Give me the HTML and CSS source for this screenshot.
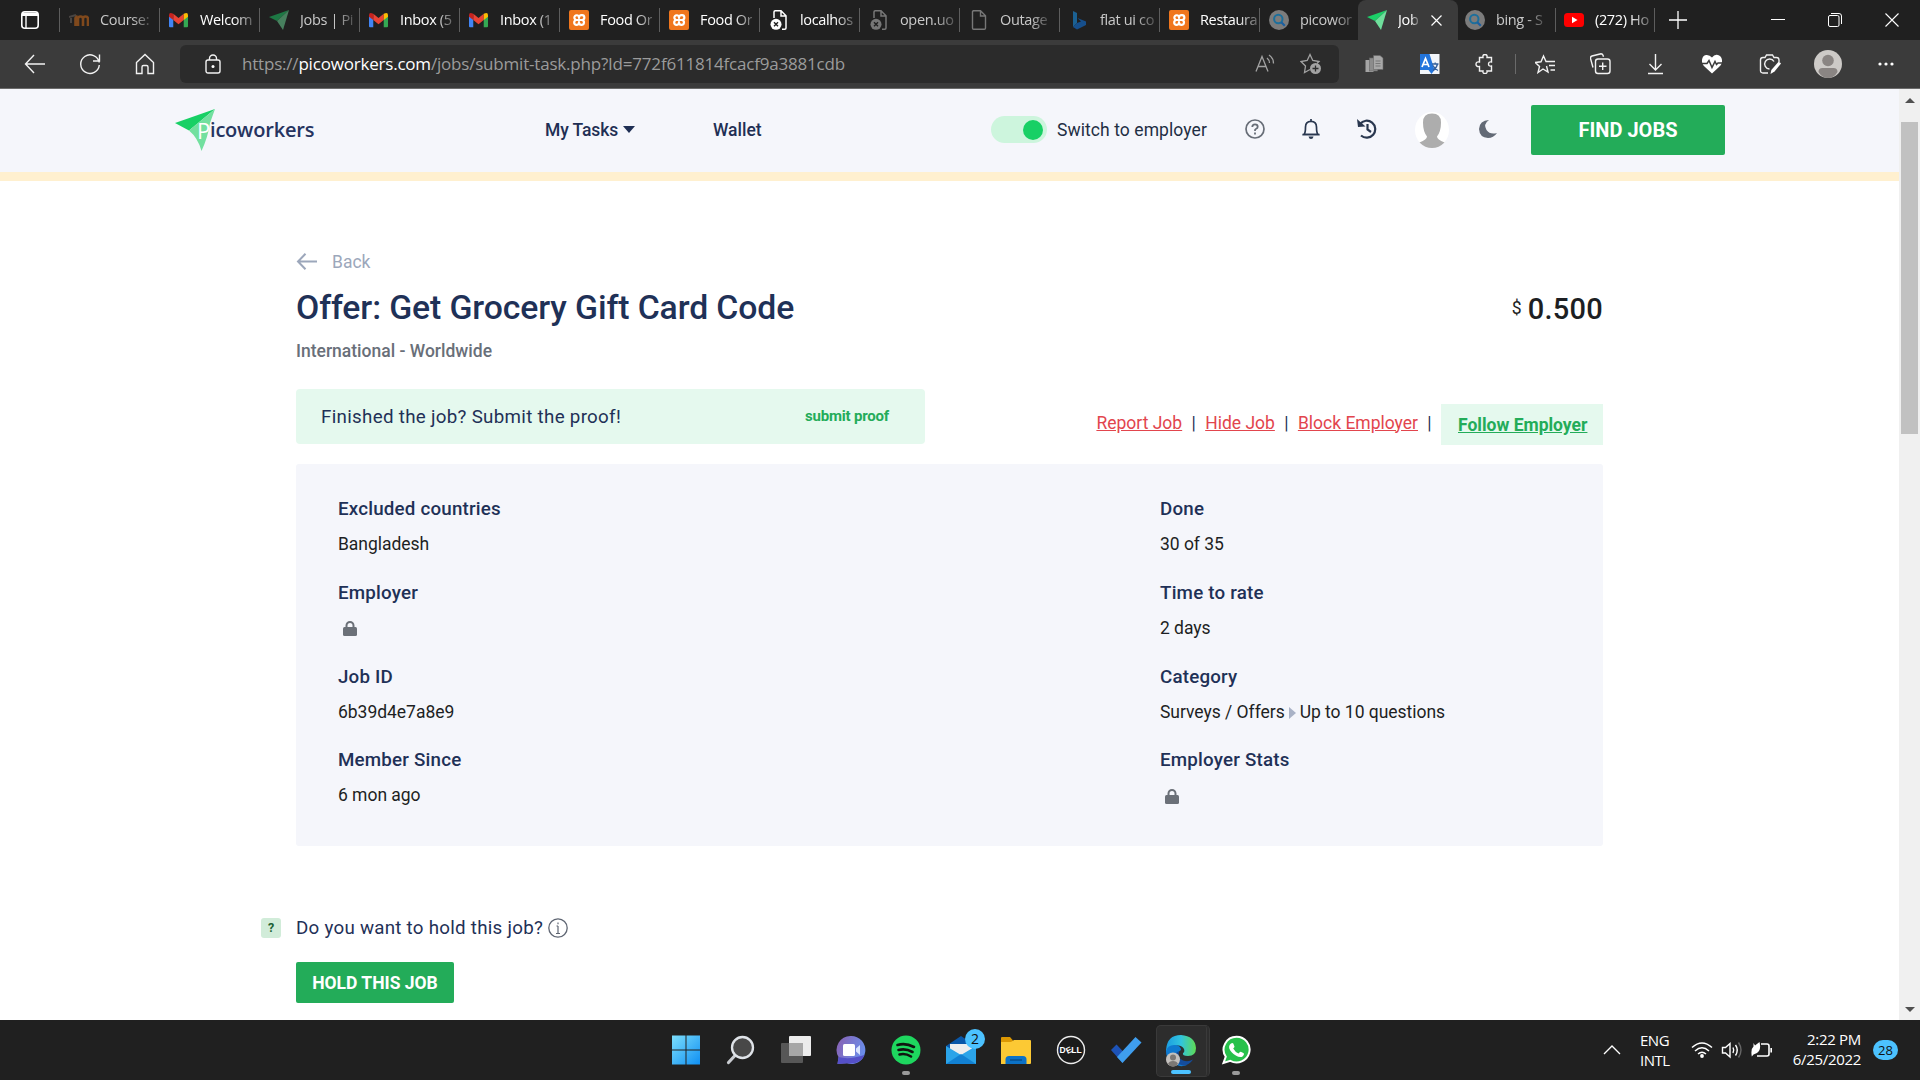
FILE: index.html
```html
<!DOCTYPE html>
<html lang="en">
<head>
<meta charset="utf-8">
<title>Job - Picoworkers</title>
<link rel="stylesheet" href="styles.css">
</head>
<body>
<svg class="defs" width="0" height="0">
  <defs>
    <symbol id="gmail" viewBox="0 0 20 16"><path fill="#4285f4" d="M0 3v11.500Q0 15.500 1 15.500H4.500V6z"/><path fill="#34a853" d="M15.500 6v9.500H19q1 0 1-1V3z"/><path fill="#ea4335" d="M4.500 1.500V8L10 12.500 15.500 8V1.500L10 6z"/><path fill="#c5221f" d="M0 3v1.500L4.500 8V1.500Q0-1 0 3z"/><path fill="#fbbc04" d="M20 3v1.500L15.500 8V1.500Q20-1 20 3z"/></symbol>
    <symbol id="xampp" viewBox="0 0 20 20"><rect width="20" height="20" rx="2" fill="#f0761d"/><path d="M9.800 10H7.200A2.400 2.400 0 1 1 9.900 6.600Q10 8 10 8 10 5 12.800 5.100A2.400 2.400 0 0 1 13 10 2.500 2.500 0 1 1 10.100 13.200Q10 12 10 12 10 15 7.200 14.900A2.500 2.500 0 0 1 7.200 10H13" fill="none" stroke="#fff" stroke-width="2.200" stroke-linejoin="round"/></symbol>
    <symbol id="plane" viewBox="0 0 20 20"><path fill="#1bd068" d="M0 7 20 0 8 11z"/><path fill="#6fdf9c" d="M20 0 8 11 14 20z"/></symbol>
    <symbol id="page" viewBox="0 0 20 20"><path d="M4 .8h7.500l5 5V18q0 1.200-1.200 1.200H4.700Q3.500 19.200 3.500 18V2Q3.500.8 4.700.8M11.500.8V6h5" fill="none" stroke="currentColor" stroke-width="1.400"/></symbol>
    <symbol id="pagex" viewBox="0 0 20 20"><path d="M5 8V2Q5 .8 6.200.8H12l5 5V18q0 1.200-1.200 1.200H13M12 .8V6h5" fill="none" stroke="currentColor" stroke-width="1.500"/><circle cx="7" cy="14.300" r="5.500" fill="currentColor"/><path d="M5 12.300l4 4m0-4l-4 4" stroke="#202020" stroke-width="1.400"/></symbol>
    <symbol id="bsearch" viewBox="0 0 20 20"><circle cx="10" cy="10" r="10" fill="#7c7c7c"/><circle cx="9.300" cy="9" r="4.200" fill="none" stroke="#1c6f9c" stroke-width="2"/><path d="M12.300 12.300l3.500 3.500" stroke="#1c5fa0" stroke-width="2.200"/></symbol>
    <symbol id="lock" viewBox="0 0 14 15"><path d="M1.500 6h11q1.500 0 1.500 1.500V13.500Q14 15 12.500 15h-11Q0 15 0 13.500v-6Q0 6 1.500 6z" fill="#6b7078"/><path d="M3.500 7V4.500a3.500 3.500 0 0 1 7 0V7" fill="none" stroke="#6b7078" stroke-width="2"/></symbol>
  </defs>
</svg>

<div class="tabbar">
  <div class="tab-actions"><svg width="18" height="18" viewBox="0 0 18 18"><rect x=".8" y=".8" width="16.400" height="16.400" rx="3" fill="none" stroke="#fff" stroke-width="1.600"/><path d="M1 1.500h16v3.500H1z" fill="#fff"/><path d="M5 4v13" stroke="#fff" stroke-width="1.400"/></svg></div>
  <div class="tab dim"><svg class="fav" viewBox="0 0 20 20"><path d="M6.500 16V8.500q0-2 2-2.300M9 16V9a2.500 2.500 0 0 1 5 0v7M14 9a2.500 2.500 0 0 1 5 0v7" fill="none" stroke="#80491c" stroke-width="2.600"/><path d="M0 7l7-2M2 8v5" stroke="#494543" stroke-width="2"/></svg><span class="label">Course:</span></div>
  <div class="tab"><svg class="fav gm"><use href="#gmail"/></svg><span class="label">Welcom</span></div>
  <div class="tab dim"><svg class="fav faded"><use href="#plane"/></svg><span class="label">Jobs | Pi</span></div>
  <div class="tab"><svg class="fav gm"><use href="#gmail"/></svg><span class="label">Inbox (5</span></div>
  <div class="tab"><svg class="fav gm"><use href="#gmail"/></svg><span class="label">Inbox (1</span></div>
  <div class="tab"><svg class="fav"><use href="#xampp"/></svg><span class="label">Food Or</span></div>
  <div class="tab"><svg class="fav"><use href="#xampp"/></svg><span class="label">Food Or</span></div>
  <div class="tab"><svg class="fav"><use href="#pagex"/></svg><span class="label">localhos</span></div>
  <div class="tab dim"><svg class="fav grey"><use href="#pagex"/></svg><span class="label">open.uo</span></div>
  <div class="tab dim"><svg class="fav grey"><use href="#page"/></svg><span class="label">Outage</span></div>
  <div class="tab dim"><svg class="fav" viewBox="0 0 20 20"><path fill="#1b6193" d="M4 1l4 2v10l-4 4z"/><path fill="#164f8c" d="M4 17l4-4 4-1.500L8.500 8 17 11.500V15l-9 4.500z"/></svg><span class="label">flat ui co</span></div>
  <div class="tab"><svg class="fav"><use href="#xampp"/></svg><span class="label">Restaura</span></div>
  <div class="tab dim nosep before-active"><svg class="fav"><use href="#bsearch"/></svg><span class="label">picowor</span></div>
  <div class="tab active"><svg class="fav"><use href="#plane"/></svg><span class="label">Job</span><svg class="tab-x" width="11" height="11" viewBox="0 0 11 11"><path d="M.5.500l10 10m0-10l-10 10" stroke="#fff" stroke-width="1.200"/></svg></div>
  <div class="tab dim short"><svg class="fav"><use href="#bsearch"/></svg><span class="label">bing - S</span></div>
  <div class="tab last"><svg class="fav" viewBox="0 0 20 20"><rect y="3" width="20" height="14" rx="3.500" fill="#f00"/><path d="M8 6.800v6.400l5.500-3.200z" fill="#fff"/></svg><span class="label">(272) Ho</span></div>
  <svg class="plus" width="18" height="18" viewBox="0 0 18 18"><path d="M9 0v18M0 9h18" stroke="#fff" stroke-width="1.300"/></svg>
  <div class="window-controls">
    <svg width="14" height="14" viewBox="0 0 14 14"><path d="M0 6.500h14" stroke="#fff"/></svg>
    <svg width="14" height="14" viewBox="0 0 14 14"><rect x=".5" y="2.500" width="10.500" height="11" rx="1.500" fill="none" stroke="#fff"/><path d="M3 .5h8q2.500 0 2.500 2.500v8" fill="none" stroke="#fff"/></svg>
    <svg width="14" height="14" viewBox="0 0 14 14"><path d="M.5.500l13 13m0-13l-13 13" stroke="#fff" stroke-width="1.100"/></svg>
  </div>
</div>

<div class="toolbar">
  <div class="navbtns">
    <svg width="22" height="20" viewBox="0 0 22 20"><path d="M21 10H1.500M10 1L1.500 10l8.500 9" class="ln"/></svg>
    <svg width="22" height="22" viewBox="0 0 22 22"><path d="M20.200 9.500A9.300 9.300 0 1 0 20.300 12M20.500 1.500V8H14" class="ln"/></svg>
    <svg width="22" height="22" viewBox="0 0 22 22"><path d="M2.500 9.500L11 1.500l8.500 8V20.500H14V14q0-1.500-1.500-1.500h-3Q8 12.500 8 14v6.500H2.500z" class="ln"/></svg>
  </div>
  <div class="address">
    <svg width="16" height="20" viewBox="0 0 16 20"><rect x="1" y="6" width="14" height="13" rx="2" class="ln"/><path d="M4.500 6V4.500a3.500 3.500 0 0 1 7 0V6" class="ln"/><circle cx="8" cy="12.500" r="1.500" fill="#fff"/></svg>
    <span class="url">https://<b>picoworkers.com</b>/jobs/submit-task.php?Id=772f611814fcacf9a3881cdb</span>
    <svg class="read" width="20" height="20" viewBox="0 0 20 20"><path d="M1 17.500L7 2.500l6 15M3 12.500h8M12 4q2.500 2 2.500 5M14 1q4.500 3 4.500 8.500" fill="none" stroke="#a2a2a2" stroke-width="1.300"/></svg>
    <svg width="22" height="22" viewBox="0 0 22 22"><path d="M10 16.500l-5.500 3 1-6.500L1 8.500l6.200-1L10 1.500l2.800 6 6.200 1-2 2" fill="none" stroke="#a2a2a2" stroke-width="1.300"/><circle cx="15.500" cy="15.500" r="5.500" fill="#a2a2a2"/><path d="M15.500 12.500v6m-3-3h6" stroke="#2b2b2b" stroke-width="1.300"/></svg>
  </div>
  <div class="extensions">
    <svg width="20" height="20" viewBox="0 0 20 20"><rect x="1" y="6" width="8" height="12" fill="#a5a5a5"/><rect x="5" y="4" width="8" height="13" fill="#8c8c8c" stroke="#666" stroke-width=".6"/><path d="M9 1.500h6.500L18.500 4v11.500H9z" fill="#a8a8a8" stroke="#666" stroke-width=".6"/><path d="M11 7h5M11 9.500h5M11 12h5" stroke="#777"/></svg>
    <svg width="20" height="20" viewBox="0 0 20 20"><rect width="20" height="20" fill="#f3f6fa"/><path d="M0 0h10l5 16-3 4-3-4H0z" fill="#2375dc"/><path d="M2.500 13L6 4.500 9.500 13M3.800 10.500h4.500" fill="none" stroke="#fff" stroke-width="1.700"/><path d="M12.500 10H19M15.700 8.500V10M13.500 16.500q3.500-2 4.500-6.500M13.500 11.500q1.500 3.500 5 5" fill="none" stroke="#35609b" stroke-width="1.300"/></svg>
    <svg width="20" height="20" viewBox="0 0 20 20"><path d="M5 3.500h3.500q-.5-3 2-3t2 3H17v4.500q-3-.5-3 2t3 2V17h-4.500q.5 2.500-2 2.500t-2-2.500H5v-4.500q-3.500.5-3.500-2.300T5 8z" class="ln"/></svg>
    <i class="bar"></i>
    <svg width="22" height="20" viewBox="0 0 22 20"><path d="M12 12l1.500 6-5-3-5 3.500L5 12.500.8 8.500l5.700-.7L9 2l2.500 5.500h9M14.500 11.500h6M16 16h4.500" class="ln"/></svg>
    <svg width="22" height="22" viewBox="0 0 22 22"><rect x="6" y="6" width="14.500" height="14.500" rx="2.500" class="ln"/><path d="M13.200 9.500v7.500M9.500 13.200H17M3.500 14.500L1 5.500Q.8 3.500 2.500 3l9-2.200q1.500 0 2 1.500l.5 1.500" class="ln"/></svg>
    <svg width="18" height="22" viewBox="0 0 18 22"><path d="M9 1v15.500M3 11l6 6 6-6M1.500 20.500h15" class="ln"/></svg>
    <div class="wide">
      <svg width="22" height="20" viewBox="0 0 22 20"><path d="M11 3.500q-2.500-3-6-2.500T1 6q-.5 4 3 7l7 6.500 7-6.500q3.500-3 3-7t-4-5-6 2.500z" fill="#fff"/><path d="M0 9.500h6l2-3 3 7 3-6 1.500 3L17 9h5" fill="none" stroke="#3b3b3b" stroke-width="1.500"/></svg>
      <svg width="22" height="22" viewBox="0 0 22 22"><path d="M9 20H4q-2.500 0-2.500-2.500V7Q1.500 4.500 4 4.500h2L7.500 2h6L15 4.500h2.500Q20 4.500 20 7v2M15 8.500a5 5 0 1 0-4.500 7.500" class="ln"/><path d="M11.500 21l.8-4 7-8q1.500-.5 2.700 1.500l-6.500 8z" fill="#fff"/></svg>
      <svg width="28" height="28" viewBox="0 0 28 28"><circle cx="14" cy="14" r="14" fill="#cdcac7"/><circle cx="14" cy="10.500" r="5.800" fill="#8a8583"/><path d="M4.500 22q0-4 4-4h11q4 0 4 4-3.500 6-9.500 6t-9.500-6z" fill="#8a8583"/></svg>
      <svg width="18" height="6" viewBox="0 0 18 6"><circle cx="3" cy="3" r="1.600" fill="#fff"/><circle cx="9" cy="3" r="1.600" fill="#fff"/><circle cx="15" cy="3" r="1.600" fill="#fff"/></svg>
    </div>
  </div>
</div>

<div class="viewport">
  <div class="page">
    <header class="site-header">
      <div class="logo"><svg width="41" height="42" viewBox="0 0 41 42"><path fill="#18d065" d="M0 14 40 0 14 21.500z"/><path fill="#72e09f" d="M40 0 14 21.500Q23 29 26.500 42 33 28 35 14z"/></svg><span class="logo-p">P</span><span class="logo-text">icoworkers</span></div>
      <nav class="menu"><a class="tasks"><span>My Tasks</span><i class="caret"></i></a><a>Wallet</a></nav>
      <div class="tools">
        <span class="toggle"><i></i></span><span class="switch">Switch to employer</span>
        <svg class="help" width="20" height="20" viewBox="0 0 20 20"><circle cx="10" cy="10" r="9" fill="none" stroke="#676d77" stroke-width="1.700"/><path d="M7.300 8q0-2.700 2.700-2.700T12.700 7.700q0 1.300-1.500 2T10 11.500v.5M10 13.500v2" fill="none" stroke="#676d77" stroke-width="1.800"/></svg>
        <svg class="bell" width="18" height="20" viewBox="0 0 18 20"><path d="M9 0v2M2 15.500Q3.500 14 3.500 8 3.500 2.300 9 2.300T14.500 8q0 6 1.500 7.500z" fill="none" stroke="#29374f" stroke-width="1.700"/><path d="M.5 15.500h17" stroke="#29374f" stroke-width="1.600"/><path d="M6.500 17.500h5q-.5 2.500-2.500 2.500t-2.500-2.500z" fill="#29374f"/></svg>
        <svg class="hist" width="20" height="20" viewBox="0 0 20 20"><path d="M3 5A8.500 8.500 0 1 1 4 16.500M10.500 5v5.500l3.500 2.500" fill="none" stroke="#29374f" stroke-width="2.200"/><path d="M0 0l1 8 7.500-.5z" fill="#29374f"/></svg>
        <svg class="face" width="34" height="36" viewBox="0 0 34 36"><ellipse cx="17" cy="18" rx="17" ry="18" fill="#fff"/><path d="M17 1.500q9 0 9 9 0 9-4 14 0 3 7.500 6Q24 36 17 36T4.500 30.500Q12 27.500 12 24.500 8 19.500 8 10.500q0-9 9-9z" fill="#adadad"/></svg>
        <svg class="moon" width="18" height="18" viewBox="0 0 18 18"><path d="M10 0Q4 4 7.500 10q3.500 5 10.500 3-3.500 5-9 5-8.500-.5-9-9Q.5.500 10 0z" fill="#636a76"/></svg>
        <button class="find">FIND JOBS</button>
      </div>
    </header>
    <div class="strip"></div>
    <main>
      <div class="back"><svg width="21" height="17" viewBox="0 0 21 17"><path d="M21 8.500H2M9.500.800L2 8.500l7.500 7.700" fill="none" stroke="#9ca7bb" stroke-width="2"/></svg><span>Back</span></div>
      <div class="heading"><h1>Offer: Get Grocery Gift Card Code</h1><div class="price"><small>$</small><b>0.500</b></div></div>
      <div class="region">International - Worldwide</div>
      <div class="actions">
        <div class="proof"><span class="ask">Finished the job? Submit the proof!</span><span class="submit">submit proof</span></div>
        <div class="links"><a>Report Job</a><i>|</i><a>Hide Job</a><i>|</i><a>Block Employer</a><i>|</i><a class="follow">Follow Employer</a></div>
      </div>
      <section class="details">
        <dl>
          <dt>Excluded countries</dt><dd>Bangladesh</dd>
          <dt>Employer</dt><dd><svg class="lock"><use href="#lock"/></svg></dd>
          <dt>Job ID</dt><dd>6b39d4e7a8e9</dd>
          <dt>Member Since</dt><dd>6 mon ago</dd>
        </dl>
        <dl>
          <dt>Done</dt><dd>30 of 35</dd>
          <dt>Time to rate</dt><dd>2 days</dd>
          <dt>Category</dt><dd>Surveys / Offers<i class="arrow"></i>Up to 10 questions</dd>
          <dt>Employer Stats</dt><dd><svg class="lock"><use href="#lock"/></svg></dd>
        </dl>
      </section>
      <div class="hold">
        <span class="qmark">?</span><span class="question">Do you want to hold this job?</span>
        <svg width="20" height="20" viewBox="0 0 20 20"><circle cx="10" cy="10" r="9.200" fill="none" stroke="#5f6673" stroke-width="1.300"/><path d="M10 8v7.500M10 4.500v1.700M8.500 8H10M8 15.500h4" fill="none" stroke="#5f6673" stroke-width="1.200"/></svg>
      </div>
      <button class="hold-btn">HOLD THIS JOB</button>
    </main>
  </div>
  <div class="scrollbar"><i class="up"></i><div class="thumb"></div><i class="down"></i></div>
</div>

<footer class="taskbar">
  <div class="apps">
    <div><svg width="30" height="30" viewBox="0 0 30 30"><defs><linearGradient id="w" gradientUnits="userSpaceOnUse" x1="0" y1="0" x2="30" y2="30"><stop stop-color="#7fe0fb"/><stop offset="1" stop-color="#0c8df2"/></linearGradient></defs><path fill="url(#w)" d="M1 .5h13.500v14H1zM15.500.500H29v14H15.500zM1 15.500h13.500v14H1zM15.500 15.500H29v14H15.500z"/></svg></div>
    <div><svg width="30" height="30" viewBox="0 0 30 30"><path d="M9.500 20L2.500 27.500" stroke="#c9ccd1" stroke-width="3.200" stroke-linecap="round"/><circle cx="16.500" cy="12.500" r="10.500" fill="#484848" stroke="#dfe3e8" stroke-width="2.300"/></svg></div>
    <div><svg width="30" height="30" viewBox="0 0 30 30"><rect x="8" y="1" width="22" height="20" rx="1" fill="#ececec"/><rect x="0" y="8" width="22" height="20" rx="1" fill="#626262" fill-opacity=".85"/><path d="M8 8h14v13H8z" fill="#a7a7a7"/></svg></div>
    <div><svg width="30" height="30" viewBox="0 0 30 30"><defs><linearGradient id="c" x2="1" y2=".4"><stop stop-color="#8a5fb0"/><stop offset="1" stop-color="#6b8dea"/></linearGradient></defs><path d="M15 1a14 14 0 1 1-4 27.300L1.500 29l1-7A14 14 0 0 1 15 1z" fill="url(#c)"/><path d="M1.500 29l1-7q11 3 26-2-4 10-17.500 8.300z" fill="#5550c8"/><rect x="7" y="9" width="12" height="12" rx="1.500" fill="#fff"/><path d="M20 13.500l4-3.500v10l-4-3.500z" fill="#d9e4ff"/></svg></div>
    <div class="running"><svg width="30" height="30" viewBox="0 0 30 30"><circle cx="15" cy="15" r="14.500" fill="#1ed75f"/><path d="M6.500 10q8-2.500 16.500 2M7.500 15q7-2 14 2M8.500 19.500q6-1.500 11.500 2" fill="none" stroke="#101510" stroke-width="2.600" stroke-linecap="round"/></svg></div>
    <div class="mail"><svg width="30" height="30" viewBox="0 0 30 30"><path d="M0 11L15 1l15 10v4H0z" fill="#0a57a8"/><path d="M4 9h22v8l-11 6-11-6z" fill="#eee"/><path d="M0 11l15 9 15-9v18H0z" fill="#2ba4e9"/><path d="M0 29l15-10 15 10z" fill="#1281d3"/></svg><span class="badge">2</span></div>
    <div><svg width="30" height="30" viewBox="0 0 30 30"><path d="M0 3q0-1 1-1h8l3 3.500V9H0z" fill="#dc9803"/><path d="M0 7h10l3-2h16q1 0 1 1v22q0 1-1 1H0z" fill="#fcc934"/><path d="M4.500 29v-4.500Q4.500 21 8 21h14q3.500 0 3.500 3.500V29z" fill="#0c72c7"/><path d="M9 25h12" stroke="#064f8e" stroke-width="1.500"/></svg></div>
    <div class="dell"><svg width="30" height="30" viewBox="0 0 30 30"><circle cx="15" cy="15" r="13.500" fill="#1b1b1b" stroke="#ececec" stroke-width="1.400"/></svg><span class="dell-name">D<em>E</em>LL</span></div>
    <div><svg width="32" height="30" viewBox="0 0 32 30"><path d="M1 15l5.500-5.500 9 9.500-3 9z" fill="#1d53b8"/><path d="M12.500 28l-5.500-6L25.500 2l6 5.500z" fill="#3f9eee"/></svg></div>
    <div class="current"><svg width="34" height="34" viewBox="0 0 34 34"><defs><linearGradient id="e" x2="1"><stop stop-color="#1b9de2"/><stop offset=".5" stop-color="#31c4de"/><stop offset="1" stop-color="#5fdb52"/></linearGradient></defs><path d="M2 17Q3 2 17 2q14 1 15 13 0 8-8 8-6 0-5-3 2-1 1-4-2-4-7-3.500Q5 13 2 20z" fill="url(#e)"/><path d="M2 18q2-7 10-6 5 1 5 5-4 2-3 7 2 7 9 8-5 2-9 .5Q2 29 2 18z" fill="#0f79cf"/><path d="M15 18q-2 7 4 9.500 5 2 10-1-4 6-10 6-9-2-8.500-9 .5-4 4.500-5.500z" fill="#154d9d"/><circle cx="9" cy="26.500" r="7" fill="#c4c1be"/><circle cx="9" cy="24.500" r="3" fill="#7c7875"/><path d="M4 31q1-3 5-3t5 3q-2 2.500-5 2.500T4 31z" fill="#7c7875"/></svg></div>
    <div class="running"><svg width="30" height="30" viewBox="0 0 30 30"><path d="M15.500 1.800a13 12.800 0 1 1-6.200 24L2.500 28l2.300-6.300A13 12.800 0 0 1 15.500 1.800z" fill="#27c14b" stroke="#fff" stroke-width="2"/><path d="M10 8.500q1.500-1.200 2.300 0l1.200 3q0 1-1.300 2 2 3.500 5.300 5 1.500-2 2.300-1.800l3 1.500q.7 1.500-1 3-2.500 2-7-.7-5-3-6.500-7-.8-3 1.700-5z" fill="#fff"/></svg></div>
  </div>
  <div class="tray">
    <svg width="18" height="10" viewBox="0 0 18 10"><path d="M1 9l8-8 8 8" fill="none" stroke="#fff" stroke-width="1.300"/></svg>
    <div class="lang"><span>ENG</span><span>INTL</span></div>
    <div class="status">
      <svg width="22" height="18" viewBox="0 0 22 18"><path d="M1 6.500q10-9 20 0M4 10q7-6.500 14 0M7 13q4-3.500 8 0" fill="none" stroke="#fff" stroke-width="1.500"/><circle cx="11" cy="15" r="1.900" fill="#fff"/></svg>
      <svg width="22" height="18" viewBox="0 0 22 18"><path d="M1.500 6.500v5.500h3L9 16V2.500L4.500 6.500z" fill="none" stroke="#fff" stroke-width="1.400"/><path d="M12 6.500q1.500 2.500 0 5.500M14.500 4q3.500 5 0 10.500" fill="none" stroke="#fff" stroke-width="1.400"/><path d="M17.500 1.500q5 7.500 0 15" fill="none" stroke="#666" stroke-width="1.400"/></svg>
      <svg width="22" height="18" viewBox="0 0 22 18"><path d="M10 3h6q2 0 2 2v8q0 2-2 2H6M20.200 7v4.500" fill="none" stroke="#fff" stroke-width="1.600"/><path d="M.8 15.500Q-.5 8 2.500 5.500V2L4 4.500 8.500 1q1.500 6-.5 9T2.500 13.500z" fill="#fff"/></svg>
    </div>
    <div class="clock"><span>2:22 PM</span><span>6/25/2022</span></div>
    <span class="count">28</span>
  </div>
</footer>
</body>
</html>
```
FILE: styles.css
```css
* { box-sizing: border-box; }
body { margin: 0; width: 1920px; height: 1080px; overflow: hidden; display: flex; flex-direction: column; font-family: Roboto, sans-serif; background: #fff; color: #1d1f23; }
svg { display: block; flex: none; }
.defs { position: absolute; }
i { font-style: normal; }
.ln { fill: none; stroke: #f2f2f2; stroke-width: 1.4; }

.tabbar { height: 40px; flex: none; background: #202020; display: flex; align-items: center; font: 14.5px/20px "Open Sans", sans-serif; letter-spacing: -.35px; color: #fff; }
.tab-actions { width: 60px; flex: none; padding-left: 21px; border-right: 1px solid #5d5d5d; height: 24px; display: flex; align-items: center; }
.tab { width: 100px; flex: none; height: 24px; border-right: 1px solid #5d5d5d; display: flex; align-items: center; padding-left: 9px; color: #fff; }
.tab.dim { color: #c9c9c9; }
.tab.nosep { border-color: transparent; }
.tab.before-active { width: 98px; }
.tab.short { width: 98px; padding-left: 7px; }
.tab.last { width: 99px; padding-left: 8px; }
.tab.active { height: 40px; background: #3b3b3b; border: 0; border-radius: 8px 8px 0 0; }
.fav { width: 20px; height: 20px; margin-right: 11px; }
.gm { height: 16px; width: 19px; margin-right: 12px; }
.faded { opacity: .5; }
.grey { color: #777; }
.label { white-space: nowrap; -webkit-mask-image: linear-gradient(90deg, #000 65%, rgba(0,0,0,.3)); mask-image: linear-gradient(90deg, #000 65%, rgba(0,0,0,.3)); }
.tab-x { margin-left: auto; margin-right: 16px; }
.plus { margin-left: 14px; }
.window-controls { margin-left: auto; margin-right: 21px; display: flex; gap: 43px; }

.toolbar { height: 49px; flex: none; background: #3b3b3b; border-bottom: 1px solid #6b6b6b; display: flex; align-items: center; }
.navbtns { width: 180px; padding-left: 24px; display: flex; align-items: center; gap: 33px; }
.address { width: 1159px; height: 38px; background: #2b2b2b; border-radius: 6px; display: flex; align-items: center; padding: 0 17px 0 25px; }
.url { margin-left: 21px; font: 17px/24px "Open Sans", sans-serif; letter-spacing: -.2px; color: #9b9b9b; white-space: nowrap; }
.url b { color: #fff; font-weight: 400; }
.read { margin-left: auto; margin-right: 25px; }
.extensions { display: flex; align-items: center; margin-left: 8px; }
.extensions > svg { margin: 0; box-sizing: content-box; padding: 0 17.5px; }
.extensions > svg[width="22"] { padding: 0 16.5px; }
.extensions > svg[width="18"] { padding: 0 18.5px; }
.bar { width: 1px; height: 20px; background: #6a6a6a; margin: 0 2.5px; }
.wide { display: grid; grid-template-columns: repeat(4, 58px); align-items: center; justify-items: center; }

.viewport { flex: 1; min-height: 0; display: flex; }
.page { width: 1899px; overflow: hidden; }
.site-header { height: 83px; background: #f5f6fb; display: flex; align-items: center; padding: 0 0 2px 175px; font-size: 17.5px; line-height: 28px; font-weight: 500; color: #1f2f54; }
.logo { display: flex; align-items: center; width: 370px; }
.logo-p { margin-left: -19px; width: 13px; color: #fff; font: 22px/28px "Open Sans", sans-serif; }
.logo-text { font: 600 20px/28px "Open Sans", sans-serif; letter-spacing: -.2px; color: #263460; }
.menu { display: flex; width: 446px; }
.tasks { display: flex; align-items: center; width: 168px; letter-spacing: -.1px; }
.caret { margin-left: 5px; border: 6px solid transparent; border-top: 7px solid #1f2f54; border-bottom: 0; }
.tools { display: flex; align-items: center; }
.toggle { width: 56px; height: 27px; border-radius: 14px; background: #cdf5dd; display: flex; justify-content: flex-end; align-items: center; padding-right: 4px; }
.toggle i { width: 20px; height: 20px; border-radius: 50%; background: #18d065; }
.switch { margin-left: 10px; width: 188px; color: #1f2f44; letter-spacing: .08px; white-space: nowrap; font-weight: 400; }
.help, .bell, .hist, .moon { margin-bottom: 2px; }
.bell { margin-left: 37px; }
.hist { margin-left: 37px; }
.face { margin-left: 38px; }
.moon { margin-left: 30px; }
button { border: 0; border-radius: 2px; background: #23ac59; color: #fff; font: 700 17.5px/28px Roboto, sans-serif; }
.find { margin-left: 34px; width: 194px; height: 50px; font-size: 20px; padding: 0; }
.strip { height: 9px; background: #fff0cf; }

main { padding: 67px 0 0 296px; width: 1603px; font-size: 17.5px; line-height: 28px; }
.back { display: flex; align-items: center; gap: 15px; color: #9ca7bb; }
.back svg { margin-bottom: 2px; }
.heading { display: flex; justify-content: space-between; height: 61px; padding-top: 10px; }
h1 { margin: 0; font-size: 33.75px; line-height: 44px; font-weight: 500; letter-spacing: -.11px; color: #1f3157; }
.price { display: flex; font-size: 29px; line-height: 47px; color: #1d1f23; }
.price b { font-weight: 500; letter-spacing: .25px; }
.price small { font-size: 17.5px; line-height: 44px; width: 16px; }
.region { font-weight: 500; color: #696f79; }
.actions { display: flex; justify-content: space-between; align-items: flex-end; height: 80px; }
.proof { width: 629px; height: 55px; margin-bottom: 1px; background: #e5f9ee; border-radius: 4px; display: flex; justify-content: space-between; align-items: center; padding: 0 36px 0 25px; color: #1f3157; }
.ask { font-size: 18.75px; letter-spacing: .3px; }
.submit { font-size: 15px; font-weight: 700; letter-spacing: -.2px; color: #23ac59; margin-bottom: 2px; }
.links { display: flex; height: 41px; align-items: center; color: #e2454d; }
.links > :not(.follow) { margin-bottom: 4px; }
.links > a { text-decoration: underline; }
.links i { color: #1f3157; width: 23px; text-align: center; }
.links .follow { background: #e5f9ee; height: 41px; width: 162px; padding: 7px 0 0 17px; font-weight: 700; color: #23ac59; white-space: nowrap; }
.details { margin-top: 19px; height: 382px; background: #f5f6fb; border-radius: 3px; padding: 31px 43px 0 42px; display: grid; grid-template-columns: 822px 1fr; }
dl { margin: 0; display: grid; grid-template-rows: repeat(4, 35px 48.75px); align-content: start; }
dt { font-size: 18.75px; font-weight: 500; letter-spacing: .2px; color: #1f3157; }
dd { margin: 0; display: flex; height: 28px; align-items: center; white-space: pre; letter-spacing: -.03px; }
.lock { width: 14px; height: 15px; margin: 2px 0 0 5px; }
.arrow { border: 6px solid transparent; border-left: 7px solid #a9b2c6; border-right: 0; margin: 2px 4px 0 4px; }
.hold { margin: 68px 0 0 -35px; display: flex; align-items: center; font-size: 18.75px; color: #1f3157; }
.question { letter-spacing: .26px; }
.qmark { width: 20px; height: 20px; border-radius: 3px; background: #d1ecd9; color: #1c6233; font: 700 12.5px/19px Roboto, sans-serif; text-align: center; margin-right: 15px; }
.hold svg { margin-left: 5px; }
.hold-btn { display: block; width: 158px; height: 41px; padding: 0; margin-top: 20px; }

.scrollbar { width: 21px; background: #f0f0f0; display: flex; flex-direction: column; align-items: center; padding: 9px 0 8px; }
.scrollbar .up { border: 5px solid transparent; border-bottom: 5px solid #505050; border-top: 0; }
.thumb { width: 17px; height: 312px; margin-top: 19px; background: #c1c1c1; }
.scrollbar .down { margin-top: auto; border: 5px solid transparent; border-top: 5px solid #505050; border-bottom: 0; }

.taskbar { height: 60px; flex: none; background: #202020; display: flex; justify-content: space-between; color: #fff; font: 15px/20px "Open Sans", sans-serif; }
.apps { display: flex; padding-left: 658px; }
.apps > div { width: 55px; height: 60px; display: flex; align-items: center; justify-content: center; position: relative; }
.running::after { content: ""; position: absolute; left: 24px; top: 51px; width: 8px; height: 4px; border-radius: 2px; background: #9a9a9a; }
.badge { position: absolute; left: 32px; top: 9px; width: 20px; height: 20px; border-radius: 50%; background: #4cc2ff; color: #111; font-size: 14px; text-align: center; }
.dell-name { position: absolute; left: 0; width: 55px; text-align: center; font: 700 8.5px/20px "Liberation Sans", sans-serif; }
.dell-name em { display: inline-block; transform: rotate(-25deg); font-style: normal; }
.current::before { content: ""; position: absolute; left: 3px; top: 5px; width: 49px; height: 50px; border-radius: 5px; border: 1px solid #3a3a3a; border-right: 4px double #3a3a3a; background: #2d2d2d; }
.current::after { content: ""; position: absolute; left: 18px; top: 50px; width: 20px; height: 4px; border-radius: 2px; background: #4cc2ff; }
.current svg { position: relative; }
.tray { display: flex; align-items: center; padding-right: 22px; }
.lang { margin-left: 19px; width: 51px; display: flex; flex-direction: column; letter-spacing: -.5px; }
.status { display: flex; gap: 8px; }
.clock { width: 88px; display: flex; flex-direction: column; align-items: flex-end; letter-spacing: -.3px; margin-top: -2px; }
.count { margin-left: 12px; width: 25px; height: 20px; border-radius: 10px; background: #4cc2ff; color: #111; font-size: 13px; text-align: center; }
```
